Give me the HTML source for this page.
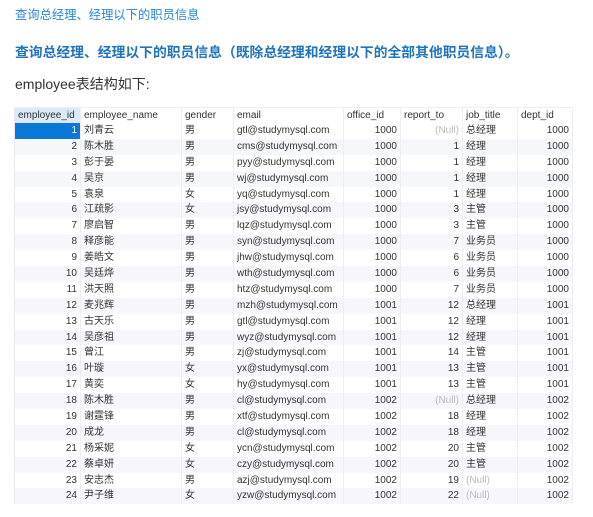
<!DOCTYPE html><html><head><meta charset="utf-8"><style>
body{margin:0;background:#fff;width:593px;height:517px;overflow:hidden;font-family:"Liberation Sans","Noto Sans CJK SC",sans-serif}
.t1{position:absolute;left:15px;top:5px;font-size:12.3px;color:#2a86d8;white-space:nowrap}
.t2{position:absolute;left:15px;top:41px;font-size:13.8px;font-weight:bold;color:#1f74bd;white-space:nowrap}
.t3{position:absolute;left:15px;top:74px;font-size:14px;color:#333;white-space:nowrap}
.tb{position:absolute;left:14px;top:107px;width:558px;font-size:10px;color:#333;border-left:1px solid #e6e9ee}
.r{height:15.9px;line-height:15.9px;display:flex;white-space:nowrap}
.r:nth-child(odd){background:#f5f7fa}
.r.h{background:#fff;border-top:1px solid #eee;height:15px;line-height:15px}
.r>div{border-right:1px solid #eceef2;box-sizing:border-box;padding:0 3px;overflow:hidden}
.c1{width:66px;text-align:right}.c2{width:101px}.c3{width:52px}.c4{width:110px}.c5{width:57px;text-align:right}.c6{width:62px;text-align:right}.c7{width:55px}.c8{width:55px;text-align:right}
.h>div{text-align:left;color:#333}
.h .c1{background:#dbe9f8}
.sel{background:#0a78d6;color:#fff}
.n{color:#bbb}
</style></head><body>
<div class="t1">查询总经理、经理以下的职员信息</div>
<div class="t2">查询总经理、经理以下的职员信息（既除总经理和经理以下的全部其他职员信息）。</div>
<div class="t3">employee表结构如下:</div>
<div class="tb">
<div class="r h"><div class="c1">employee_id</div><div class="c2">employee_name</div><div class="c3">gender</div><div class="c4">email</div><div class="c5">office_id</div><div class="c6">report_to</div><div class="c7">job_title</div><div class="c8">dept_id</div></div>
<div class="r"><div class="c1 sel">1</div><div class="c2">刘青云</div><div class="c3">男</div><div class="c4">gtl@studymysql.com</div><div class="c5">1000</div><div class="c6 n">(Null)</div><div class="c7">总经理</div><div class="c8">1000</div></div>
<div class="r"><div class="c1">2</div><div class="c2">陈木胜</div><div class="c3">男</div><div class="c4">cms@studymysql.com</div><div class="c5">1000</div><div class="c6">1</div><div class="c7">经理</div><div class="c8">1000</div></div>
<div class="r"><div class="c1">3</div><div class="c2">彭于晏</div><div class="c3">男</div><div class="c4">pyy@studymysql.com</div><div class="c5">1000</div><div class="c6">1</div><div class="c7">经理</div><div class="c8">1000</div></div>
<div class="r"><div class="c1">4</div><div class="c2">吴京</div><div class="c3">男</div><div class="c4">wj@studymysql.com</div><div class="c5">1000</div><div class="c6">1</div><div class="c7">经理</div><div class="c8">1000</div></div>
<div class="r"><div class="c1">5</div><div class="c2">袁泉</div><div class="c3">女</div><div class="c4">yq@studymysql.com</div><div class="c5">1000</div><div class="c6">1</div><div class="c7">经理</div><div class="c8">1000</div></div>
<div class="r"><div class="c1">6</div><div class="c2">江疏影</div><div class="c3">女</div><div class="c4">jsy@studymysql.com</div><div class="c5">1000</div><div class="c6">3</div><div class="c7">主管</div><div class="c8">1000</div></div>
<div class="r"><div class="c1">7</div><div class="c2">廖启智</div><div class="c3">男</div><div class="c4">lqz@studymysql.com</div><div class="c5">1000</div><div class="c6">3</div><div class="c7">主管</div><div class="c8">1000</div></div>
<div class="r"><div class="c1">8</div><div class="c2">释彦能</div><div class="c3">男</div><div class="c4">syn@studymysql.com</div><div class="c5">1000</div><div class="c6">7</div><div class="c7">业务员</div><div class="c8">1000</div></div>
<div class="r"><div class="c1">9</div><div class="c2">姜皓文</div><div class="c3">男</div><div class="c4">jhw@studymysql.com</div><div class="c5">1000</div><div class="c6">6</div><div class="c7">业务员</div><div class="c8">1000</div></div>
<div class="r"><div class="c1">10</div><div class="c2">吴廷烨</div><div class="c3">男</div><div class="c4">wth@studymysql.com</div><div class="c5">1000</div><div class="c6">6</div><div class="c7">业务员</div><div class="c8">1000</div></div>
<div class="r"><div class="c1">11</div><div class="c2">洪天照</div><div class="c3">男</div><div class="c4">htz@studymysql.com</div><div class="c5">1000</div><div class="c6">7</div><div class="c7">业务员</div><div class="c8">1000</div></div>
<div class="r"><div class="c1">12</div><div class="c2">麦兆辉</div><div class="c3">男</div><div class="c4">mzh@studymysql.com</div><div class="c5">1001</div><div class="c6">12</div><div class="c7">总经理</div><div class="c8">1001</div></div>
<div class="r"><div class="c1">13</div><div class="c2">古天乐</div><div class="c3">男</div><div class="c4">gtl@studymysql.com</div><div class="c5">1001</div><div class="c6">12</div><div class="c7">经理</div><div class="c8">1001</div></div>
<div class="r"><div class="c1">14</div><div class="c2">吴彦祖</div><div class="c3">男</div><div class="c4">wyz@studymysql.com</div><div class="c5">1001</div><div class="c6">12</div><div class="c7">经理</div><div class="c8">1001</div></div>
<div class="r"><div class="c1">15</div><div class="c2">曾江</div><div class="c3">男</div><div class="c4">zj@studymysql.com</div><div class="c5">1001</div><div class="c6">14</div><div class="c7">主管</div><div class="c8">1001</div></div>
<div class="r"><div class="c1">16</div><div class="c2">叶璇</div><div class="c3">女</div><div class="c4">yx@studymysql.com</div><div class="c5">1001</div><div class="c6">13</div><div class="c7">主管</div><div class="c8">1001</div></div>
<div class="r"><div class="c1">17</div><div class="c2">黄奕</div><div class="c3">女</div><div class="c4">hy@studymysql.com</div><div class="c5">1001</div><div class="c6">13</div><div class="c7">主管</div><div class="c8">1001</div></div>
<div class="r"><div class="c1">18</div><div class="c2">陈木胜</div><div class="c3">男</div><div class="c4">cl@studymysql.com</div><div class="c5">1002</div><div class="c6 n">(Null)</div><div class="c7">总经理</div><div class="c8">1002</div></div>
<div class="r"><div class="c1">19</div><div class="c2">谢霆锋</div><div class="c3">男</div><div class="c4">xtf@studymysql.com</div><div class="c5">1002</div><div class="c6">18</div><div class="c7">经理</div><div class="c8">1002</div></div>
<div class="r"><div class="c1">20</div><div class="c2">成龙</div><div class="c3">男</div><div class="c4">cl@studymysql.com</div><div class="c5">1002</div><div class="c6">18</div><div class="c7">经理</div><div class="c8">1002</div></div>
<div class="r"><div class="c1">21</div><div class="c2">杨采妮</div><div class="c3">女</div><div class="c4">ycn@studymysql.com</div><div class="c5">1002</div><div class="c6">20</div><div class="c7">主管</div><div class="c8">1002</div></div>
<div class="r"><div class="c1">22</div><div class="c2">蔡卓妍</div><div class="c3">女</div><div class="c4">czy@studymysql.com</div><div class="c5">1002</div><div class="c6">20</div><div class="c7">主管</div><div class="c8">1002</div></div>
<div class="r"><div class="c1">23</div><div class="c2">安志杰</div><div class="c3">男</div><div class="c4">azj@studymysql.com</div><div class="c5">1002</div><div class="c6">19</div><div class="c7 n">(Null)</div><div class="c8">1002</div></div>
<div class="r"><div class="c1">24</div><div class="c2">尹子维</div><div class="c3">女</div><div class="c4">yzw@studymysql.com</div><div class="c5">1002</div><div class="c6">22</div><div class="c7 n">(Null)</div><div class="c8">1002</div></div>
</div>
</body></html>
